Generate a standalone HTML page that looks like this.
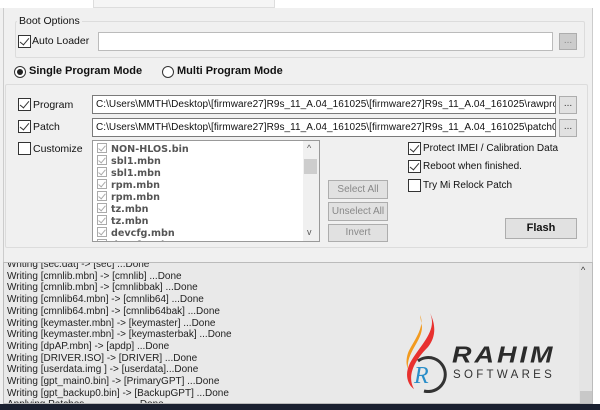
<!DOCTYPE html>
<html><head><meta charset="utf-8"><style>
*{margin:0;padding:0;box-sizing:border-box}
body{width:600px;height:410px;overflow:hidden;background:#f0f0f0;font-family:"Liberation Sans",sans-serif;font-size:10.5px;color:#111;position:relative}
.a{position:absolute}
.cb{position:absolute;width:13px;height:13px;border:1px solid #333;background:#fff}
.cb.k::after{content:"";position:absolute;left:3px;top:0px;width:4px;height:8px;border:solid #333;border-width:0 1.5px 1.5px 0;transform:rotate(40deg)}
.tb{position:absolute;background:#fff;border:1px solid #7a7a7a;height:19px;font-size:10px;line-height:17px;padding-left:3px;white-space:nowrap;overflow:hidden;letter-spacing:0.05px}
.btn{position:absolute;background:#e1e1e1;border:1px solid #adadad;text-align:center;font-size:10px;color:#888}
.log{font-size:10px;line-height:11.7px;color:#222;white-space:nowrap}
.li{color:#555;font-weight:bold;font-family:"DejaVu Sans",sans-serif;font-size:9.6px;line-height:12px;height:12px;white-space:nowrap}
.li span{display:inline-block;width:10px;height:10px;border:1px solid #aaa;margin-right:4px;vertical-align:-1px;position:relative}
.li span::after{content:"";position:absolute;left:2px;top:0;width:3px;height:6px;border:solid #aaa;border-width:0 1px 1px 0;transform:rotate(40deg)}
</style></head><body>
<div class="a" style="left:0;top:0;width:600px;height:8px;background:#fff"></div>
<div class="a" style="left:93px;top:0;width:182px;height:8px;border:1px solid #ddd;border-top:none;background:#f5f5f5"></div>
<div class="a" style="left:3px;top:8px;width:590px;height:396px;border-left:1px solid #ccc;border-right:1px solid #ccc"></div>
<div class="a" style="left:593px;top:8px;width:7px;height:396px;background:#fff"></div>

<div class="a" style="left:15px;top:21px;width:570px;height:37px;border:1px solid #dcdcdc;border-radius:2px"></div>
<div class="a" style="left:17px;top:15px;background:#f0f0f0;padding:0 2px;font-size:10.5px">Boot Options</div>
<div class="cb k" style="left:18px;top:35px"></div>
<div class="a" style="left:32px;top:35px">Auto Loader</div>
<div class="tb" style="left:98px;top:32px;width:455px;border-color:#bbb"></div>
<div class="btn" style="left:559px;top:33px;width:18px;height:17px;background:#ccc;line-height:14px">...</div>

<div class="a" style="left:14px;top:66px;width:12px;height:12px;border:1px solid #333;border-radius:50%;background:#fff"><div style="position:absolute;left:2px;top:2px;width:6px;height:6px;border-radius:50%;background:#222"></div></div>
<div class="a" style="left:29px;top:65px;font-weight:bold;font-size:11px">Single Program Mode</div>
<div class="a" style="left:162px;top:66px;width:12px;height:12px;border:1px solid #333;border-radius:50%;background:#fff"></div>
<div class="a" style="left:177px;top:65px;font-weight:bold;font-size:11px">Multi Program Mode</div>

<div class="a" style="left:5px;top:84px;width:583px;height:164px;border:1px solid #dcdcdc;border-radius:2px"></div>
<div class="cb k" style="left:18px;top:98px"></div><div class="a" style="left:33px;top:99px">Program</div>
<div class="tb" style="left:92px;top:95px;width:464px">C:\Users\MMTH\Desktop\[firmware27]R9s_11_A.04_161025\[firmware27]R9s_11_A.04_161025\rawprogram</div>
<div class="btn" style="left:559px;top:96px;width:18px;height:18px;color:#333;line-height:14px">...</div>
<div class="cb k" style="left:18px;top:120px"></div><div class="a" style="left:33px;top:121px">Patch</div>
<div class="tb" style="left:92px;top:118px;width:464px">C:\Users\MMTH\Desktop\[firmware27]R9s_11_A.04_161025\[firmware27]R9s_11_A.04_161025\patch0</div>
<div class="btn" style="left:559px;top:119px;width:18px;height:18px;color:#333;line-height:14px">...</div>
<div class="cb" style="left:18px;top:142px"></div><div class="a" style="left:33px;top:143px">Customize</div>

<div class="a" style="left:92px;top:140px;width:228px;height:102px;border:1px solid #999;background:#fff;overflow:hidden">
<div style="padding:2px 0 0 4px">
<div class="li"><span></span>NON-HLOS.bin</div><div class="li"><span></span>sbl1.mbn</div><div class="li"><span></span>sbl1.mbn</div><div class="li"><span></span>rpm.mbn</div><div class="li"><span></span>rpm.mbn</div><div class="li"><span></span>tz.mbn</div><div class="li"><span></span>tz.mbn</div><div class="li"><span></span>devcfg.mbn</div><div class="li"><span></span>devcfg.mbn</div>
</div>
<div style="position:absolute;left:210px;top:0;width:16px;height:100px;background:#f0f0f0"><div style="position:absolute;left:1px;top:18px;width:13px;height:15px;background:#cdcdcd"></div><div style="position:absolute;left:4px;top:2px;font-size:9px;color:#555">^</div><div style="position:absolute;left:4px;top:86px;font-size:9px;color:#555">v</div></div>
</div>

<div class="btn" style="left:328px;top:180px;width:60px;height:19px;line-height:17px">Select All</div>
<div class="btn" style="left:328px;top:202px;width:60px;height:19px;line-height:17px">Unselect All</div>
<div class="btn" style="left:328px;top:224px;width:60px;height:18px;line-height:16px">Invert</div>

<div class="cb k" style="left:408px;top:142px"></div><div class="a" style="left:423px;top:143px;font-size:10px">Protect IMEI / Calibration Data</div>
<div class="cb k" style="left:408px;top:160px"></div><div class="a" style="left:423px;top:161px;font-size:10px">Reboot when finished.</div>
<div class="cb" style="left:408px;top:179px"></div><div class="a" style="left:423px;top:180px;font-size:10px">Try Mi Relock Patch</div>
<div class="btn" style="left:505px;top:218px;width:72px;height:21px;color:#111;font-weight:bold;font-size:11px;line-height:19px">Flash</div>

<div class="a" style="left:3px;top:262px;width:590px;height:142px;border:1px solid #bbb;background:#e9e9e9;overflow:hidden">
<div class="log" style="position:absolute;left:3px;top:-4px">
<div>Writing [sec.dat] -> [sec] ...Done</div>
<div>Writing [cmnlib.mbn] -> [cmnlib] ...Done</div>
<div>Writing [cmnlib.mbn] -> [cmnlibbak] ...Done</div>
<div>Writing [cmnlib64.mbn] -> [cmnlib64] ...Done</div>
<div>Writing [cmnlib64.mbn] -> [cmnlib64bak] ...Done</div>
<div>Writing [keymaster.mbn] -> [keymaster] ...Done</div>
<div>Writing [keymaster.mbn] -> [keymasterbak] ...Done</div>
<div>Writing [dpAP.mbn] -> [apdp] ...Done</div>
<div>Writing [DRIVER.ISO] -> [DRIVER] ...Done</div>
<div>Writing [userdata.img ] -> [userdata]...Done</div>
<div>Writing [gpt_main0.bin] -> [PrimaryGPT] ...Done</div>
<div>Writing [gpt_backup0.bin] -> [BackupGPT] ...Done</div>
<div>Applying Patches ...................Done</div>
</div>
<div style="position:absolute;left:575px;top:0;width:14px;height:140px;background:#e4e4e4"><div style="position:absolute;left:2px;top:2px;font-size:9px;color:#333">^</div><div style="position:absolute;left:1px;top:128px;width:12px;height:14px;background:#c8c8c8"></div></div>
<svg style="position:absolute;left:396px;top:50px" width="50" height="80" viewBox="0 0 50 80">
<path d="M20 2 C26 14 12 30 8 40 C6 46 6 52 8 56 C6 40 22 28 22 14 Z" fill="#f29a1e"/>
<path d="M30 0 C38 18 20 32 10 50 C4 62 8 72 14 76 C6 62 16 46 28 34 C36 24 36 12 30 0 Z" fill="#e8312f"/>
<path d="M18 48 A17 17 0 1 1 24 78" fill="none" stroke="#333" stroke-width="3"/>
<text x="14" y="70" font-family="Liberation Serif,serif" font-style="italic" font-size="24" fill="#2a8ec9">R</text>
</svg>
<div style="position:absolute;left:448px;top:81px;font-weight:bold;font-style:italic;font-size:27px;color:#2b2b2b;letter-spacing:3px;line-height:26px;transform:scaleY(0.85);transform-origin:top left">RAHIM</div>
<div style="position:absolute;left:449px;top:106px;font-size:11.5px;color:#333;letter-spacing:3.3px;line-height:12px">SOFTWARES</div>
</div>
<div class="a" style="left:0;top:404px;width:600px;height:6px;background:#1a2030"></div>
</body></html>
